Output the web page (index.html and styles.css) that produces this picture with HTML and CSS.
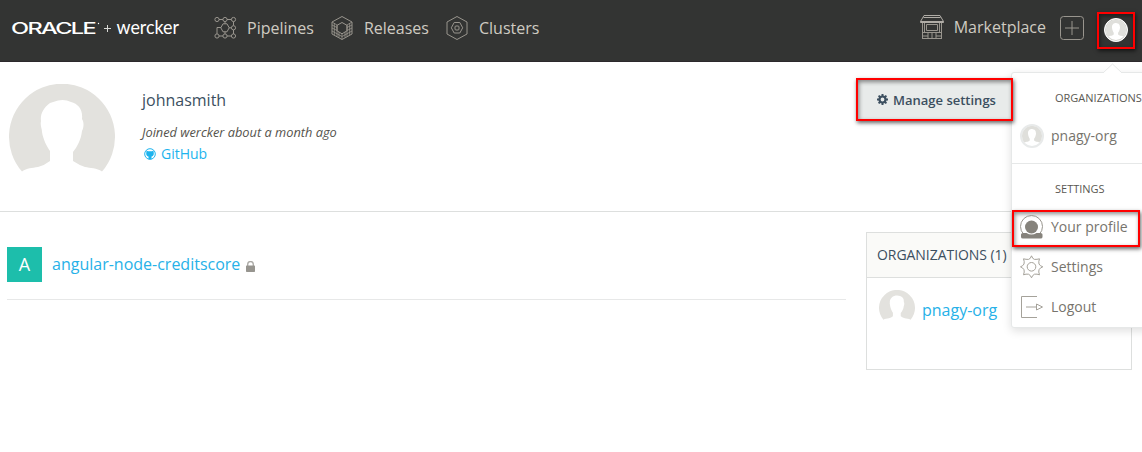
FILE: index.html
```html
<!DOCTYPE html>
<html lang="en">
<head>
<meta charset="utf-8">
<title>johnasmith - wercker</title>
<link rel="stylesheet" href="styles.css">
</head>
<body>
<svg class="defs" width="0" height="0" aria-hidden="true">
  <symbol id="avatar" viewBox="0 0 106 106">
    <path d="M13 87.500A53 53 0 1 1 93 87.500C88 84 81 84 76 83Q70 81 64 77V68C68 63 72 56 73 47C75 43 75 38 73 35C74 25 69 20 62 18Q56 15 49 16.500L41 19C34 24 31 31 32 37C31 42 33 44 33 48C34 55 38 63 41 67V77Q36 81 29 83C23 84 18 84 13 87.500Z"/>
  </symbol>
</svg>
<header class="topbar">
  <a class="brand">
    <svg width="170" height="24" viewBox="0 0 170 24">
      <text class="oracle" transform="translate(-1 16.500) scale(1.52 1)">ORACLE</text>
      <circle cx="86.500" cy="6.500" r=".7"/>
      <path class="plus" d="M92 11.500h7M95.500 8v7"/>
      <text class="wercker" x="104.500" y="16.500" textLength="62.500" lengthAdjust="spacingAndGlyphs">wercker</text>
    </svg>
  </a>
  <nav class="nav">
    <a class="nav-item">
      <svg class="line" width="24" height="24" viewBox="0 0 24 24">
        <circle cx="4" cy="3.500" r="2.100"/><circle cx="12" cy="3.500" r="2.100"/><circle cx="20.500" cy="3.500" r="2.100"/>
        <circle cx="20.500" cy="11.800" r="2.100"/><circle cx="4" cy="20" r="2.100"/><circle cx="12" cy="20" r="2.100"/><circle cx="20.500" cy="20" r="2.100"/>
        <path d="M6 3.500h4M14 3.500h4.400M20.500 5.600v4M20.500 14v4M6 20h4M14 20h4.400M12 5.600v2.200M12 15.700v2.200M16 11.800h2.400M4 17.900v-6.400h4"/>
        <path d="M10 7.800h4l2.200 4-2.200 4h-4l-2.200-4z"/>
      </svg>Pipelines</a>
    <a class="nav-item">
      <svg class="line" width="24" height="24" viewBox="0 0 24 24">
        <path d="M12 .5 22 6v12l-10 5.500L2 18V6z"/>
        <path d="M12 6.500 17 9.300v5.500l-5 3-5-3V9.300z"/>
        <path class="mesh" d="M2 9l5 2.500M2 12l5 2.500M2 15l10 5.500L22 15M22 9l-5 2.500M22 12l-5 2.500M4.300 7v12M9 16v5.500M12 18v5M15 16v5.500M19.700 7v12M2 6l5 3M22 6l-5 3M7 9v11.500M17 9v11.500"/>
      </svg>Releases</a>
    <a class="nav-item">
      <svg class="line" width="24" height="24" viewBox="0 0 24 24">
        <path d="M12 .5 22 6v12l-10 5.500L2 18V6z"/>
        <path d="M9.200 6.500h5.600l2.900 5.300-2.900 5.200H9.200l-2.900-5.200z"/>
        <rect x="10" y="10" width="4" height="4" rx="1"/>
      </svg>Clusters</a>
  </nav>
  <div class="tools">
    <svg class="line shop" width="24" height="26" viewBox="0 0 24 26">
      <path class="roof" d="M4 .5h16M3.500 2.500h17M4 .5 .5 6.500v1h23v-1L20 .5M.5 6.500h23"/>
      <path d="M2.500 8v16M21.500 8v16M4.500 8v9M19.500 8v9M6.500 9.500h11v6h-11zM2 17.500h20M2 23.500h20M8 18v6M12 18v6M16 18v6M2 21h6M16 21h6"/>
    </svg>
    <a class="market">Marketplace</a>
    <svg class="line add" width="25" height="25" viewBox="0 0 25 25">
      <rect x=".5" y=".5" width="23" height="23" rx="3"/><path d="M12 5v14M5 12h14"/>
    </svg>
    <span class="user mark"><span class="disc"><svg width="20" height="20"><use href="#avatar"/></svg></span></span>
  </div>
</header>

<section class="profile">
  <svg class="portrait" width="106" height="106"><use href="#avatar"/></svg>
  <div class="about">
    <h1>johnasmith</h1>
    <p class="joined">Joined wercker about a month ago</p>
    <a class="github">
      <svg width="12" height="12" viewBox="0 0 12 12"><circle cx="6" cy="6" r="5.300" fill="none" stroke="currentColor"/><path fill="currentColor" d="M2.500 2.500 4 3.200h4l1.500-.7.300 3c0 1.800-.8 2.700-2.300 3V11.300h-3V8.500C3 8.200 2.200 7.300 2.200 5.500z"/></svg>GitHub</a>
  </div>
  <a class="manage mark">
    <svg width="11" height="11" viewBox="0 0 11 11"><circle cx="5.500" cy="5.500" r="3" fill="none" stroke="currentColor" stroke-width="2.200"/><path stroke="currentColor" stroke-width="2" d="M5.500 0v2M5.500 9v2M0 5.500h2M9 5.500h2M1.600 1.600l1.300 1.300M8.100 8.100l1.300 1.300M1.600 9.400l1.300-1.300M8.100 2.900l1.300-1.300"/></svg>Manage settings</a>
</section>

<main class="content">
  <div class="apps">
    <div class="app">
      <span class="badge">A</span>
      <a>angular-node-creditscore</a>
      <svg width="9" height="11" viewBox="0 0 9 11"><path fill="none" stroke="#aaa9a5" stroke-width="1.300" d="M1.700 5V3.400a2.800 2.800 0 0 1 5.600 0V5"/><rect y="4.500" width="9" height="6.500" rx=".7" fill="#97958f"/></svg>
    </div>
  </div>
  <aside class="orgs">
    <h2>ORGANIZATIONS (1)</h2>
    <div class="org"><svg width="36" height="36"><use href="#avatar"/></svg><a>pnagy-org</a></div>
  </aside>
</main>

<div class="menu">
  <svg class="caret" width="20" height="10" viewBox="0 0 20 10"><path d="M0 10 9.500 1 19 10" fill="#fff" stroke="#e6e8e8"/></svg>
  <h3 class="first">ORGANIZATIONS</h3>
  <a class="entry org-entry"><span class="disc"><svg width="20" height="20"><use href="#avatar"/></svg></span>pnagy-org</a>
  <h3 class="second">SETTINGS</h3>
  <a class="entry chosen mark">
    <svg width="24" height="24" viewBox="0 0 24 24"><circle cx="11.500" cy="11.500" r="11" fill="none" stroke="#98958e"/><circle cx="11.500" cy="12" r="6.500" fill="#86837c"/><path fill="#86837c" d="M1 19.500Q1 18 3 18h3.500q5 3 10 0H20.500q2 0 2 1.500V22q0 1.500-2 1.500H3Q1 23.500 1 22z"/></svg>Your profile</a>
  <a class="entry">
    <svg class="outline" width="24" height="24" viewBox="0 0 24 24"><path d="M11.500 .8 Q12.500 4 14.500 4.400Q17 4.500 19.500 3.800Q18.300 7 19 9Q20 11 22.800 11.800Q20 12.800 19 14.700Q18.300 16.800 19.500 19.800Q17 18.800 14.500 19.200Q12.500 20 11.500 22.800Q10.500 20 8.500 19.200Q6 18.800 3.500 19.800Q4.700 16.800 4 14.700Q3 12.800 .5 11.800Q3 11 4 9Q4.700 7 3.500 3.800Q6 4.500 8.500 4.400Q10.500 4 11.500 .8Z"/><circle cx="11.500" cy="11.800" r="4.300"/></svg>Settings</a>
  <a class="entry">
    <svg class="outline" width="24" height="24" viewBox="0 0 24 24"><path d="M17 1.500H1.500v21H17M6 12h10.500M16.500 9v6l6-3z"/></svg>Logout</a>
</div>
</body>
</html>
```

FILE: styles.css
```css
* { box-sizing: border-box; }
body {
  margin: 0;
  height: 452px;
  overflow: hidden;
  position: relative;
  background: #fff;
  color: #3c4f5f;
  font: 16px/24px "Open Sans", "Noto Sans", sans-serif;
}
h1, h2, h3, p { margin: 0; font-weight: 400; }
svg { display: block; flex: none; }
.defs { position: absolute; }
.line { fill: none; stroke: #99958e; stroke-width: 1; }
.outline { fill: none; stroke: #a5a29a; stroke-width: 1; }
.mesh { stroke-width: .8; }
.roof { stroke: #b0aca6; }

/* Red callout frame */
.mark { border: 2px solid #f00; box-shadow: 1px 2px 4px rgba(0, 0, 0, .6), inset 1px 2px 4px rgba(0, 0, 0, .45); }

.topbar {
  height: 62px;
  display: flex;
  align-items: flex-start;
  background: #333433;
  border-bottom: 1px solid #2c292c;
  color: #cfcbc2;
}
.brand { padding: 17px 0 0 12px; width: 213px; }
.brand svg { fill: #fff; overflow: visible; }
.oracle { font: 500 15.500px Inter, sans-serif; letter-spacing: -1.100px; }
.wercker { font: 400 18.500px Lato, sans-serif; }
.plus { stroke: #d8d8d5; stroke-width: 1; }
.nav { display: flex; padding-top: 16px; }
.nav-item { display: flex; gap: 10px; }
.nav-item + .nav-item { margin-left: 16px; }
.tools { display: flex; margin-left: auto; padding-right: 7px; }
.shop { margin: 15px 10px 0 0; }
.market { padding-top: 15px; }
.add { margin: 16px 12px 0 14px; }
.user { width: 38px; height: 37px; margin-top: 12px; padding: 4px 0 0 5px; }
.disc {
  display: flex;
  width: 24px;
  height: 24px;
  padding: 2px;
  border-radius: 50%;
  background: #fff;
  fill: #dfdfdb;
}
.user .disc { border: 1px solid #fff; padding: 1px; box-shadow: inset 0 0 0 1px #d5d5d0; }

.profile {
  height: 150px;
  display: flex;
  align-items: flex-start;
  padding: 22px 0 0 9px;
  border-bottom: 1px solid #dddfde;
}
.portrait { fill: #e3e2de; }
.about { margin-left: 27px; padding-top: 4px; }
.about h1 { font-size: 16px; line-height: 24px; }
.joined { margin-top: 9px; margin-bottom: -1px; font-size: 12.800px; line-height: 22px; font-style: italic; color: #55534d; }
.github { display: flex; align-items: center; gap: 5px; padding-left: 2px; font-size: 14px; line-height: 24px; color: #1db4ee; }
.manage {
  position: relative;
  z-index: 1;
  width: 157px;
  height: 43px;
  margin: -6px 129px 0 auto;
  display: flex;
  align-items: center;
  gap: 5px;
  padding-left: 19px;
  background: #e8ebea;
  font-size: 13px;
  font-weight: 600;
}

.content { display: flex; justify-content: space-between; padding: 20px 10px 0 7px; }
.content a { color: #27b1e8; }
.apps { width: 839px; }
.app { height: 68px; display: flex; align-items: center; padding-bottom: 2px; border-bottom: 1px solid #e7e8e8; }
.app a { padding-bottom: 2px; }
.badge { width: 35px; height: 35px; margin-right: 10px; background: #1dbeab; color: #fff; text-align: center; font-size: 18px; line-height: 35px; }
.app svg { margin: 4px 0 0 6px; }
.orgs { width: 266px; height: 138px; border: 1px solid #dddfde; }
.orgs h2 { height: 45px; padding-left: 10px; background: #fafaf8; border-bottom: 1px solid #dddfde; font-size: 14px; line-height: 44px; letter-spacing: -.05px; }
.org { display: flex; padding: 12px 0 0 12px; gap: 7px; fill: #e3e2de; }
.org a { padding-top: 8px; }

.menu {
  position: absolute;
  left: 1011px;
  top: 72px;
  width: 140px;
  height: 256px;
  background: #fff;
  border: 1px solid #e6e8e8;
  border-radius: 3px;
  box-shadow: 0 3px 10px rgba(0, 0, 0, .13);
  color: #77746d;
}
.caret { position: absolute; left: 91px; top: -10px; }
.menu h3 { padding-left: 43px; font-size: 11px; line-height: 18px; color: #5a5852; }
.first { padding-top: 16px; }
.entry { display: flex; align-items: center; height: 40px; padding-left: 8px; gap: 7px; font-size: 14px; }
.org-entry { height: 57px; padding-top: 1px; border-bottom: 1px solid #e6e8e8; }
.org-entry .disc { background: #fff; border: 2px solid #e8eaea; padding: 0; }
.second { padding-top: 16px; }
.chosen { width: 128px; height: 37px; margin: 12px 0 0; padding: 0 0 3px 6px; }
```
